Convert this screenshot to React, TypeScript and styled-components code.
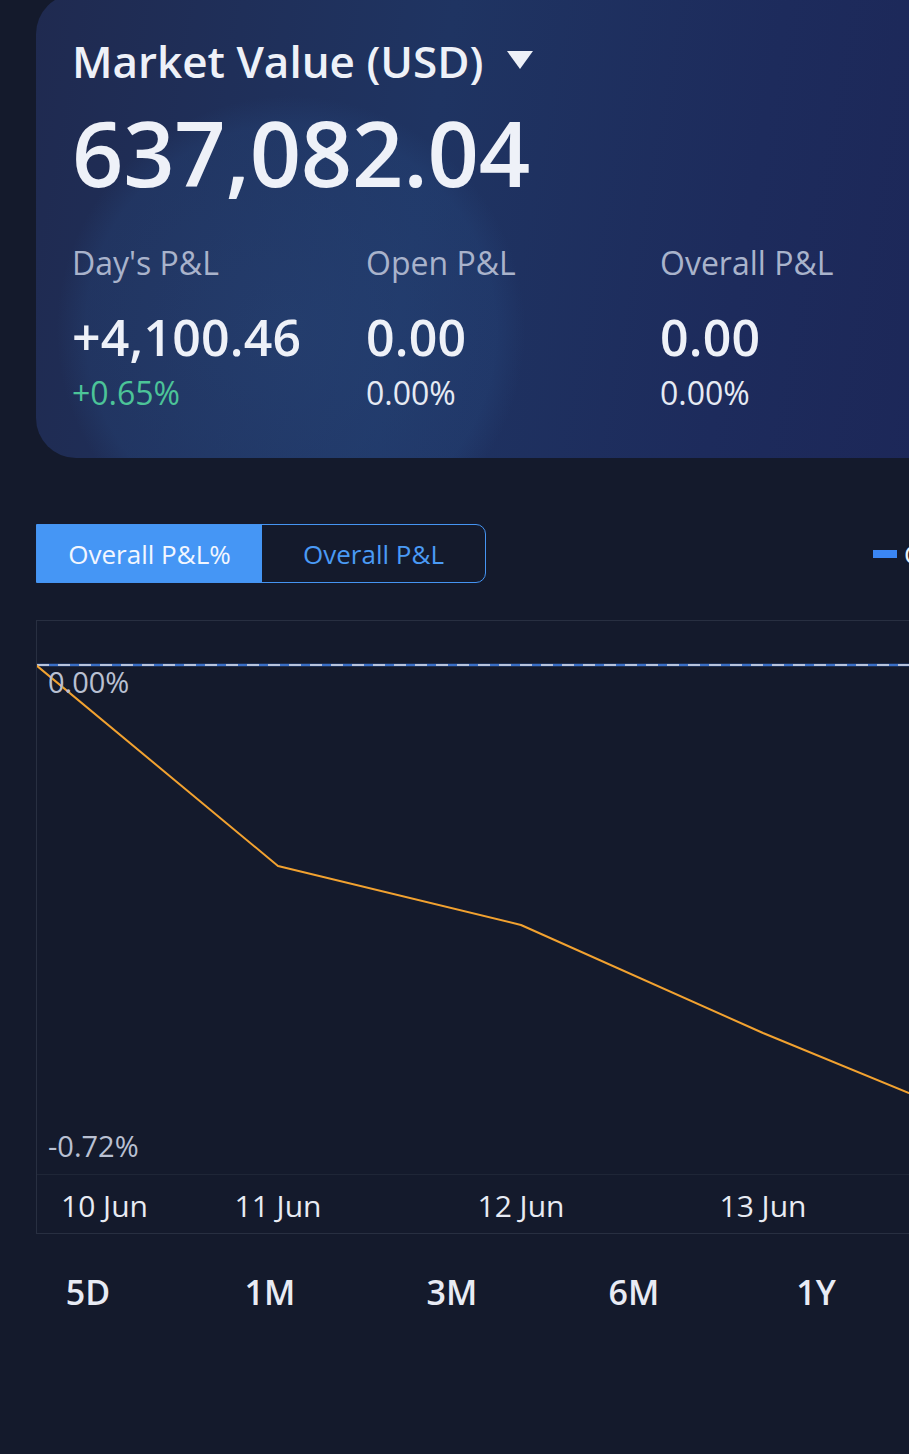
import React from "react";
import styled, {createGlobalStyle} from "styled-components";

const GlobalStyle = createGlobalStyle`
    html, body {
        margin: 0;
        padding: 0;
        overflow: hidden;
        background: #141a2c;
    }

    body {
        font-family: "Open Sans", "Noto Sans", sans-serif;
        color: #eef1f8;
    }
`

const Page = styled.div`
    width: 1024px;
    padding: 0 0 120px 36px;
`

const Card = styled.section`
    margin-top: -6px;
    padding: 41px 0 46px 36px;
    border-radius: 40px;
    background:
        radial-gradient(circle at 255px 336px, rgba(46, 84, 140, 0.32) 0, rgba(40, 76, 132, 0.26) 205px, rgba(40, 76, 132, 0) 234px),
        linear-gradient(100deg, #1f2a50 0%, #1f3462 38%, #1d2b5c 68%, #1c2556 100%);
`

const TitleRow = styled.div`
    display: flex;
    align-items: center;
    gap: 24px;
    height: 53px;
`

const Title = styled.h1`
    margin: 0;
    font-size: 44px;
    line-height: 53px;
    font-weight: 600;
    color: #eef1f8;
`

const Caret = styled.span`
    width: 0;
    height: 0;
    margin-top: -4px;
    border-left: 13px solid transparent;
    border-right: 13px solid transparent;
    border-top: 18px solid #eef1f8;
`

const BigValue = styled.div`
    margin-top: 18px;
    font-size: 90px;
    line-height: 92px;
    font-weight: 600;
    letter-spacing: -0.3px;
    color: #eef1f8;
`

const Stats = styled.div`
    display: grid;
    grid-template-columns: repeat(3, 294px);
    margin-top: 46px;
`

const Stat = styled.div`
    display: flex;
    flex-direction: column;
`

const StatLabel = styled.div`
    font-size: 32px;
    line-height: 38px;
    color: #a9b3cb;
`

const StatValue = styled.div`
    margin-top: 26px;
    font-size: 50px;
    line-height: 58px;
    font-weight: 600;
    letter-spacing: 0.2px;
    color: #eef1f8;
`

const StatPct = styled.div<{ $up?: boolean }>`
    margin-top: 8px;
    font-size: 32px;
    line-height: 38px;
    color: ${p => (p.$up ? "#4cc498" : "#e6eaf3")};
`

const ToggleRow = styled.div`
    display: flex;
    align-items: center;
    margin-top: 66px;
`

const Toggle = styled.div`
    display: flex;
    flex-shrink: 0;
    height: 59px;
    box-sizing: border-box;
    border: 1.5px solid #4594f2;
    border-radius: 0 10px 10px 0;
    overflow: hidden;
`

const Segment = styled.button<{ $active?: boolean }>`
    width: ${p => (p.$active ? "225px" : "223px")};
    border: none;
    padding: 0;
    font-family: inherit;
    font-size: 26px;
    color: ${p => (p.$active ? "#f2f6ff" : "#4a9af5")};
    background: ${p => (p.$active ? "#4596f5" : "transparent")};
`

const Legend = styled.div`
    display: flex;
    flex-shrink: 0;
    align-items: center;
    gap: 7px;
    margin-left: 387px;
    font-size: 26px;
    white-space: nowrap;
    color: #eef1f8;
`

const LegendSwatch = styled.span`
    width: 24px;
    height: 8px;
    background: #3b86f3;
`

const ChartBox = styled.div`
    margin-top: 37px;
    border: 1px solid #282f41;
    border-right: none;
`

const Plot = styled.div`
    position: relative;
    height: 553px;
    border-bottom: 1px solid #1f2637;
    overflow: hidden;
`

const PlotSvg = styled.svg`
    display: block;
    width: 100%;
    height: 100%;
`

const YLabel = styled.span<{ $top: number }>`
    position: absolute;
    left: 11px;
    top: ${p => p.$top}px;
    font-size: 29px;
    line-height: 34px;
    color: #b9c0d2;
`

const Axis = styled.div`
    position: relative;
    height: 58px;
`

const DateLabel = styled.span<{ $x: number; $first?: boolean }>`
    position: absolute;
    top: 13px;
    left: ${p => p.$x}px;
    transform: ${p => (p.$first ? "none" : "translateX(-50%)")};
    font-size: 30px;
    line-height: 36px;
    white-space: nowrap;
    color: #e8ebf3;
`

const Periods = styled.nav`
    display: grid;
    grid-template-columns: repeat(5, 182px);
    margin: 38px 0 0 -39px;
`

const Period = styled.button`
    border: none;
    padding: 0;
    background: none;
    font-family: inherit;
    font-size: 34px;
    line-height: 41px;
    font-weight: 600;
    color: #e8ebf4;
    text-align: center;
`

const stats = [
    {label: "Day's P&L", value: "+4,100.46", pct: "+0.65%", up: true},
    {label: "Open P&L", value: "0.00", pct: "0.00%"},
    {label: "Overall P&L", value: "0.00", pct: "0.00%"},
];

// chart coordinates, relative to the plot's inner box
const points = [[-1, 44], [241, 245], [484, 304], [726, 412], [872, 472], [1000, 524]];
const dates = [{x: 24, text: "10 Jun", first: true}, {x: 241, text: "11 Jun"}, {x: 484, text: "12 Jun"}, {x: 726, text: "13 Jun"}];

export default function App() {
    return (
        <Page>
            <GlobalStyle/>
            <Card>
                <TitleRow>
                    <Title>Market Value (USD)</Title>
                    <Caret/>
                </TitleRow>
                <BigValue>637,082.04</BigValue>
                <Stats>
                    {stats.map(s => (
                        <Stat key={s.label}>
                            <StatLabel>{s.label}</StatLabel>
                            <StatValue>{s.value}</StatValue>
                            <StatPct $up={s.up}>{s.pct}</StatPct>
                        </Stat>
                    ))}
                </Stats>
            </Card>

            <ToggleRow>
                <Toggle>
                    <Segment $active>Overall P&amp;L%</Segment>
                    <Segment>Overall P&amp;L</Segment>
                </Toggle>
                <Legend>
                    <LegendSwatch/>
                    Overall P&amp;L%
                </Legend>
            </ToggleRow>

            <ChartBox>
                <Plot>
                    <PlotSvg>
                        <line x1="0" y1="44" x2="1100" y2="44" stroke="#3a6fc6" strokeWidth="2.5"/>
                        <line x1="0" y1="44" x2="1100" y2="44" stroke="#b7c3dc" strokeWidth="2" strokeDasharray="12 9"/>
                        <polyline
                            points={points.map(p => p.join(",")).join(" ")}
                            fill="none"
                            stroke="#f2a230"
                            strokeWidth="2"
                            strokeLinejoin="round"
                        />
                    </PlotSvg>
                    <YLabel $top={44}>0.00%</YLabel>
                    <YLabel $top={508}>-0.72%</YLabel>
                </Plot>
                <Axis>
                    {dates.map(d => (
                        <DateLabel key={d.text} $x={d.x} $first={d.first}>{d.text}</DateLabel>
                    ))}
                </Axis>
            </ChartBox>

            <Periods>
                {["5D", "1M", "3M", "6M", "1Y"].map(p => <Period key={p}>{p}</Period>)}
            </Periods>
        </Page>
    );
}
